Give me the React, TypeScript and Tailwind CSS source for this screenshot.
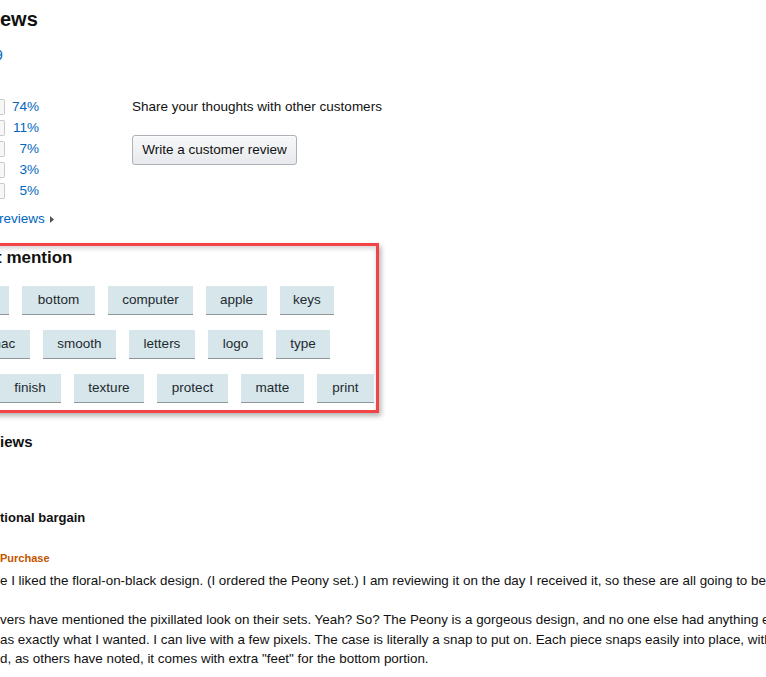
import React from "react";

const bars = ["74%", "11%", "7%", "3%", "5%"];

const chipRows = [
  {
    offset: "ml-0",
    chips: [
      { label: "case", w: "w-[61px]" },
      { label: "bottom", w: "w-[73px]" },
      { label: "computer", w: "w-[85px]" },
      { label: "apple", w: "w-[61px]" },
      { label: "keys", w: "w-[54px]" },
    ],
  },
  {
    offset: "ml-[27px]",
    chips: [
      { label: "mac", w: "w-[55px]" },
      { label: "smooth", w: "w-[73px]" },
      { label: "letters", w: "w-[66px]" },
      { label: "logo", w: "w-[55px]" },
      { label: "type", w: "w-[54px]" },
    ],
  },
  {
    offset: "ml-[51px]",
    chips: [
      { label: "finish", w: "w-[62px]" },
      { label: "texture", w: "w-[70px]" },
      { label: "protect", w: "w-[71px]" },
      { label: "matte", w: "w-[63px]" },
      { label: "print", w: "w-[57px]" },
    ],
  },
];

const reviewLines = [
  "e I liked the floral-on-black design. (I ordered the Peony set.) I am reviewing it on the day I received it, so these are all going to be first impressions.",
  "",
  "vers have mentioned the pixillated look on their sets. Yeah? So? The Peony is a gorgeous design, and no one else had anything even close.",
  "as exactly what I wanted. I can live with a few pixels. The case is literally a snap to put on. Each piece snaps easily into place, with a satisfying click.",
  "d, as others have noted, it comes with extra \"feet\" for the bottom portion.",
];

const Chip = ({ label, w }: { label: string; w: string }) => (
  <div
    className={`${w} h-[29px] shrink-0 flex items-center justify-center bg-[#d6e6ea] border-b border-[#8e9699] text-[13.5px] text-[#1f2a30]`}
  >
    {label}
  </div>
);

export default function App() {
  return (
    <div className="w-[766px] h-[677px] overflow-hidden bg-white text-[#111] font-['Liberation_Sans',Arial,sans-serif]">
      {/* rating summary */}
      <div className="flex">
        <div className="w-[132px] shrink-0">
          <h2 className="pt-[5px] text-[20px] leading-[28px] font-bold">ews</h2>
          <div className="mt-[13px] -ml-[5px] text-[14px] leading-[18px] text-[#0066c0]">9</div>

          <div className="mt-[35px] flex flex-col gap-[5px]">
            {bars.map((p) => (
              <div key={p} className="flex items-center h-[16px]">
                <div className="w-[5px] h-[16px] bg-[#f7f7f7] border-y border-r border-[#c9c9c9] rounded-r-[2px]" />
                <div className="w-[34px] text-right text-[13.5px] leading-[16px] text-[#0066c0]">{p}</div>
              </div>
            ))}
          </div>

          <div className="mt-[11px] -ml-[1px] flex items-center gap-[5px] text-[13.5px] leading-[18px] text-[#0066c0]">
            <span>reviews</span>
            <svg width="4" height="7" viewBox="0 0 4 7" className="mt-[1px]">
              <path d="M0 0 L4 3.5 L0 7 Z" fill="#555" />
            </svg>
          </div>
        </div>

        <div className="pt-[97px]">
          <p className="text-[13.5px] leading-[19px]">Share your thoughts with other customers</p>
          <button className="mt-[19px] w-[165px] h-[30px] rounded-[3px] border border-[#adb1b8] bg-gradient-to-b from-[#f7f8fa] to-[#e7e9ec] text-[13.5px] text-[#111] shadow-[inset_0_1px_0_rgba(255,255,255,0.6)]">
            Write a customer review
          </button>
        </div>
      </div>

      {/* highlighted mentions */}
      <div className="mt-[15px] -ml-[100px] w-[479px] border-[3px] border-[#f24346] pl-[45px] pb-[7px] shadow-[2px_3px_5px_rgba(0,0,0,0.3),inset_0_3px_4px_rgba(0,0,0,0.15)]">
        <h3 className="pt-[2px] ml-[48px] text-[17px] leading-[20px] font-bold">t mention</h3>
        <div className="mt-[18px] flex flex-col gap-[15px]">
          {chipRows.map((row, i) => (
            <div key={i} className={`${row.offset} flex gap-[13px]`}>
              {row.chips.map((c) => (
                <Chip key={c.label} label={c.label} w={c.w} />
              ))}
            </div>
          ))}
        </div>
      </div>

      {/* top reviews */}
      <div>
        <h3 className="mt-[19px] text-[15px] leading-[20px] font-bold">iews</h3>
        <div className="mt-[57px] text-[13px] leading-[18px] font-bold">tional bargain</div>
        <div className="mt-[23px] text-[11px] leading-[16px] font-bold text-[#c45500]">Purchase</div>
        <div className="mt-[5px] text-[13.4px] leading-[19.5px] text-[#111]">
          {reviewLines.map((line, i) => (
            <div key={i} className="whitespace-nowrap h-[19.5px]">
              {line}
            </div>
          ))}
        </div>
      </div>
    </div>
  );
}
